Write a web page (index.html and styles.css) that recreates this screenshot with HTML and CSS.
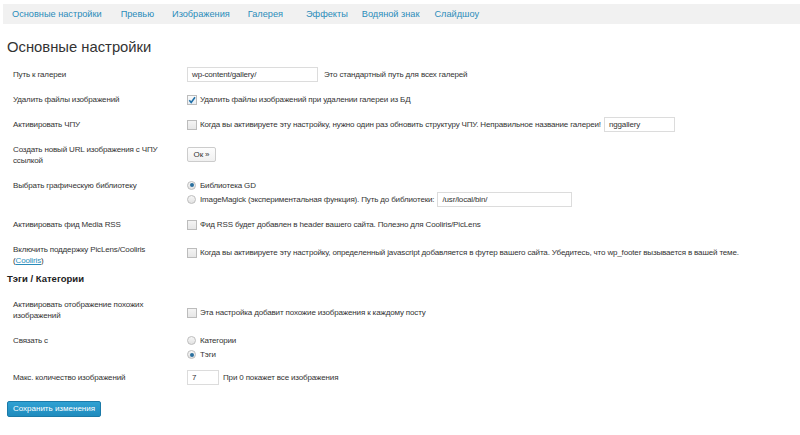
FILE: index.html
```html
<!DOCTYPE html>
<html lang="ru">
<head>
<meta charset="utf-8">
<title>Основные настройки</title>
<link rel="stylesheet" href="styles.css">
</head>
<body>
<nav class="tabs">
  <a class="tab t1">Основные настройки</a>
  <a class="tab t2">Превью</a>
  <a class="tab t3">Изображения</a>
  <a class="tab t4">Галерея</a>
  <a class="tab t5">Эффекты</a>
  <a class="tab t6">Водяной знак</a>
  <a class="tab t7">Слайдшоу</a>
</nav>
<main class="page">
  <h1 class="title">Основные настройки</h1>

  <div class="row r1">
    <div class="label">Путь к галереи</div>
    <div class="ctrl"><span class="input w-path">wp-content/gallery/</span><span class="desc">Это стандартный путь для всех галерей</span></div>
  </div>

  <div class="row r2">
    <div class="label">Удалить файлы изображений</div>
    <div class="ctrl"><span class="cb checked"><svg viewBox="0 0 10 10" width="10" height="10"><path d="M2.3 5.2 L4.2 7.4 L8 2.2" fill="none" stroke="#1f6fa8" stroke-width="1.6"/></svg></span>Удалить файлы изображений при удалении галереи из БД</div>
  </div>

  <div class="row r3">
    <div class="label">Активировать ЧПУ</div>
    <div class="ctrl"><span class="cb"></span>Когда вы активируете эту настройку, нужно один раз обновить структуру ЧПУ. Неправильное название галереи! <span class="input w-ngg">nggallery</span></div>
  </div>

  <div class="row r4">
    <div class="label">Создать новый URL изображения с ЧПУ ссылкой</div>
    <div class="ctrl"><span class="btn">Ок »</span></div>
  </div>

  <div class="row r5">
    <div class="label">Выбрать графическую библиотеку</div>
    <div class="ctrl radios">
      <div class="opt"><span class="rb on"></span>Библиотека GD</div>
      <div class="opt"><span class="rb"></span>ImageMagick (экспериментальная функция). Путь до библиотеки: <span class="input w-lib">/usr/local/bin/</span></div>
    </div>
  </div>

  <div class="row r6">
    <div class="label">Активировать фид Media RSS</div>
    <div class="ctrl"><span class="cb"></span>Фид RSS будет добавлен в header вашего сайта. Полезно для Cooliris/PicLens</div>
  </div>

  <div class="row r7">
    <div class="label">Включить поддержку PicLens/Cooliris <span class="nowrap">(<a class="link">Cooliris</a>)</span></div>
    <div class="ctrl"><span class="cb"></span>Когда вы активируете эту настройку, определенный javascript добавляется в футер вашего сайта. Убедитесь, что wp_footer вызывается в вашей теме.</div>
  </div>

  <h2 class="section">Тэги / Категории</h2>

  <div class="row r8">
    <div class="label">Активировать отображение похожих изображений</div>
    <div class="ctrl"><span class="cb"></span>Эта настройка добавит похожие изображения к каждому посту</div>
  </div>

  <div class="row r9">
    <div class="label">Связать с</div>
    <div class="ctrl radios">
      <div class="opt"><span class="rb"></span>Категории</div>
      <div class="opt"><span class="rb on"></span>Тэги</div>
    </div>
  </div>

  <div class="row r10">
    <div class="label">Макс. количество изображений</div>
    <div class="ctrl"><span class="input w-num">7</span><span class="desc">При 0 покажет все изображения</span></div>
  </div>

  <div class="actions"><span class="save">Сохранить изменения</span></div>
</main>
</body>
</html>
```

FILE: styles.css
```css
html, body {
  margin: 0;
  padding: 0;
  background: #ffffff;
}
body {
  font-family: "Liberation Sans", Arial, sans-serif;
  color: #333333;
  width: 800px;
  height: 435px;
  overflow: hidden;
}
.tabs {
  margin: 4px 0 0 3px;
  height: 20px;
  background: #f1f1f1;
  display: flex;
  align-items: center;
  font-size: 9.2px;
}
.tab {
  color: #2a8cba;
  text-decoration: none;
  white-space: nowrap;
}
.t1 { margin-left: 9px; }
.t2 { margin-left: 19px; }
.t3 { margin-left: 18px; }
.t4 { margin-left: 18px; }
.t5 { margin-left: 23px; }
.t6 { margin-left: 14px; }
.t7 { margin-left: 15px; }

.page {
  padding-left: 7px;
}
.title {
  margin: 13px 0 0 0;
  font-size: 14.8px;
  font-weight: normal;
  line-height: 20px;
  color: #333;
  height: 21px;
}
.row {
  display: flex;
  padding: 7px 0;
  font-size: 8px;
  letter-spacing: -0.15px;
  line-height: 11px;
}
.label {
  width: 160px;
  margin-left: 6px;
  margin-right: 14px;
  color: #333;
}
.nowrap { white-space: nowrap; }
.ctrl {
  color: #333;
  white-space: nowrap;
  display: flex;
  align-items: center;
  height: 11px;
}
.r1 { margin-top: 4px; }
.r4 .ctrl { margin-top: 3px; height: 15px; }
.r4 .label { width: 152px; margin-right: 22px; }
.r7 .label { width: 152px; margin-right: 22px; }
.r7 .ctrl { margin-top: 3px; }
.r8 .ctrl { margin-top: 8px; }
.r8 .label { width: 152px; margin-right: 22px; }

.input {
  display: inline-flex;
  align-items: center;
  box-sizing: border-box;
  height: 15px;
  border: 1px solid #dcdcdc;
  background: #fff;
  padding: 0 4px;
  color: #333;
  flex: none;
}
.w-path { width: 131px; margin-right: 6px; }
.w-ngg { width: 71px; margin-left: 3px; }
.w-lib { width: 135px; margin-left: 3px; }
.w-num { width: 32px; margin-right: 4px; }

.cb {
  display: inline-block;
  box-sizing: border-box;
  width: 10px;
  height: 10px;
  border: 1px solid #bcbcbc;
  background: linear-gradient(#f4f4f4, #e6e6e6);
  margin-right: 3px;
  flex: none;
  position: relative;
}
.cb svg {
  position: absolute;
  left: -1px;
  top: -1px;
}
.cb.checked {
  background: linear-gradient(#fafafa, #e8eef4);
}
.radios {
  flex-direction: column;
  align-items: flex-start;
  height: auto;
}
.opt {
  display: flex;
  align-items: center;
  height: 14px;
}
.r5 .radios { margin-top: -2px; margin-bottom: -1px; }
.r9 .radios { margin-top: -1.5px; margin-bottom: -3.5px; }
.rb {
  display: inline-block;
  box-sizing: border-box;
  width: 9px;
  height: 9px;
  border-radius: 50%;
  border: 1px solid #bdbdbd;
  background: linear-gradient(#f6f6f6, #e2e2e2);
  margin-right: 4px;
  flex: none;
  position: relative;
}
.rb.on::after {
  content: "";
  position: absolute;
  left: 1.5px;
  top: 1.5px;
  width: 4px;
  height: 4px;
  border-radius: 50%;
  background: #2a6f9e;
}
.btn {
  display: inline-flex;
  align-items: center;
  justify-content: center;
  box-sizing: border-box;
  width: 29px;
  height: 15px;
  border: 1px solid #cccccc;
  border-radius: 2px;
  background: linear-gradient(#fdfdfd, #f0f0f0);
  color: #333;
}
.link {
  color: #2a8cba;
  text-decoration: underline;
}
.section {
  margin: 0;
  font-size: 9.5px;
  font-weight: bold;
  line-height: 12px;
  height: 12px;
  margin-bottom: 7px;
  color: #222;
}
.actions {
  margin-top: 7px;
}
.save {
  display: inline-flex;
  align-items: center;
  justify-content: center;
  box-sizing: border-box;
  width: 94px;
  height: 16px;
  border: 1px solid #1b7aa8;
  border-radius: 2px;
  background: linear-gradient(#2fa1d3, #1f8bbd);
  color: #ffffff;
  font-size: 8px;
}
```
